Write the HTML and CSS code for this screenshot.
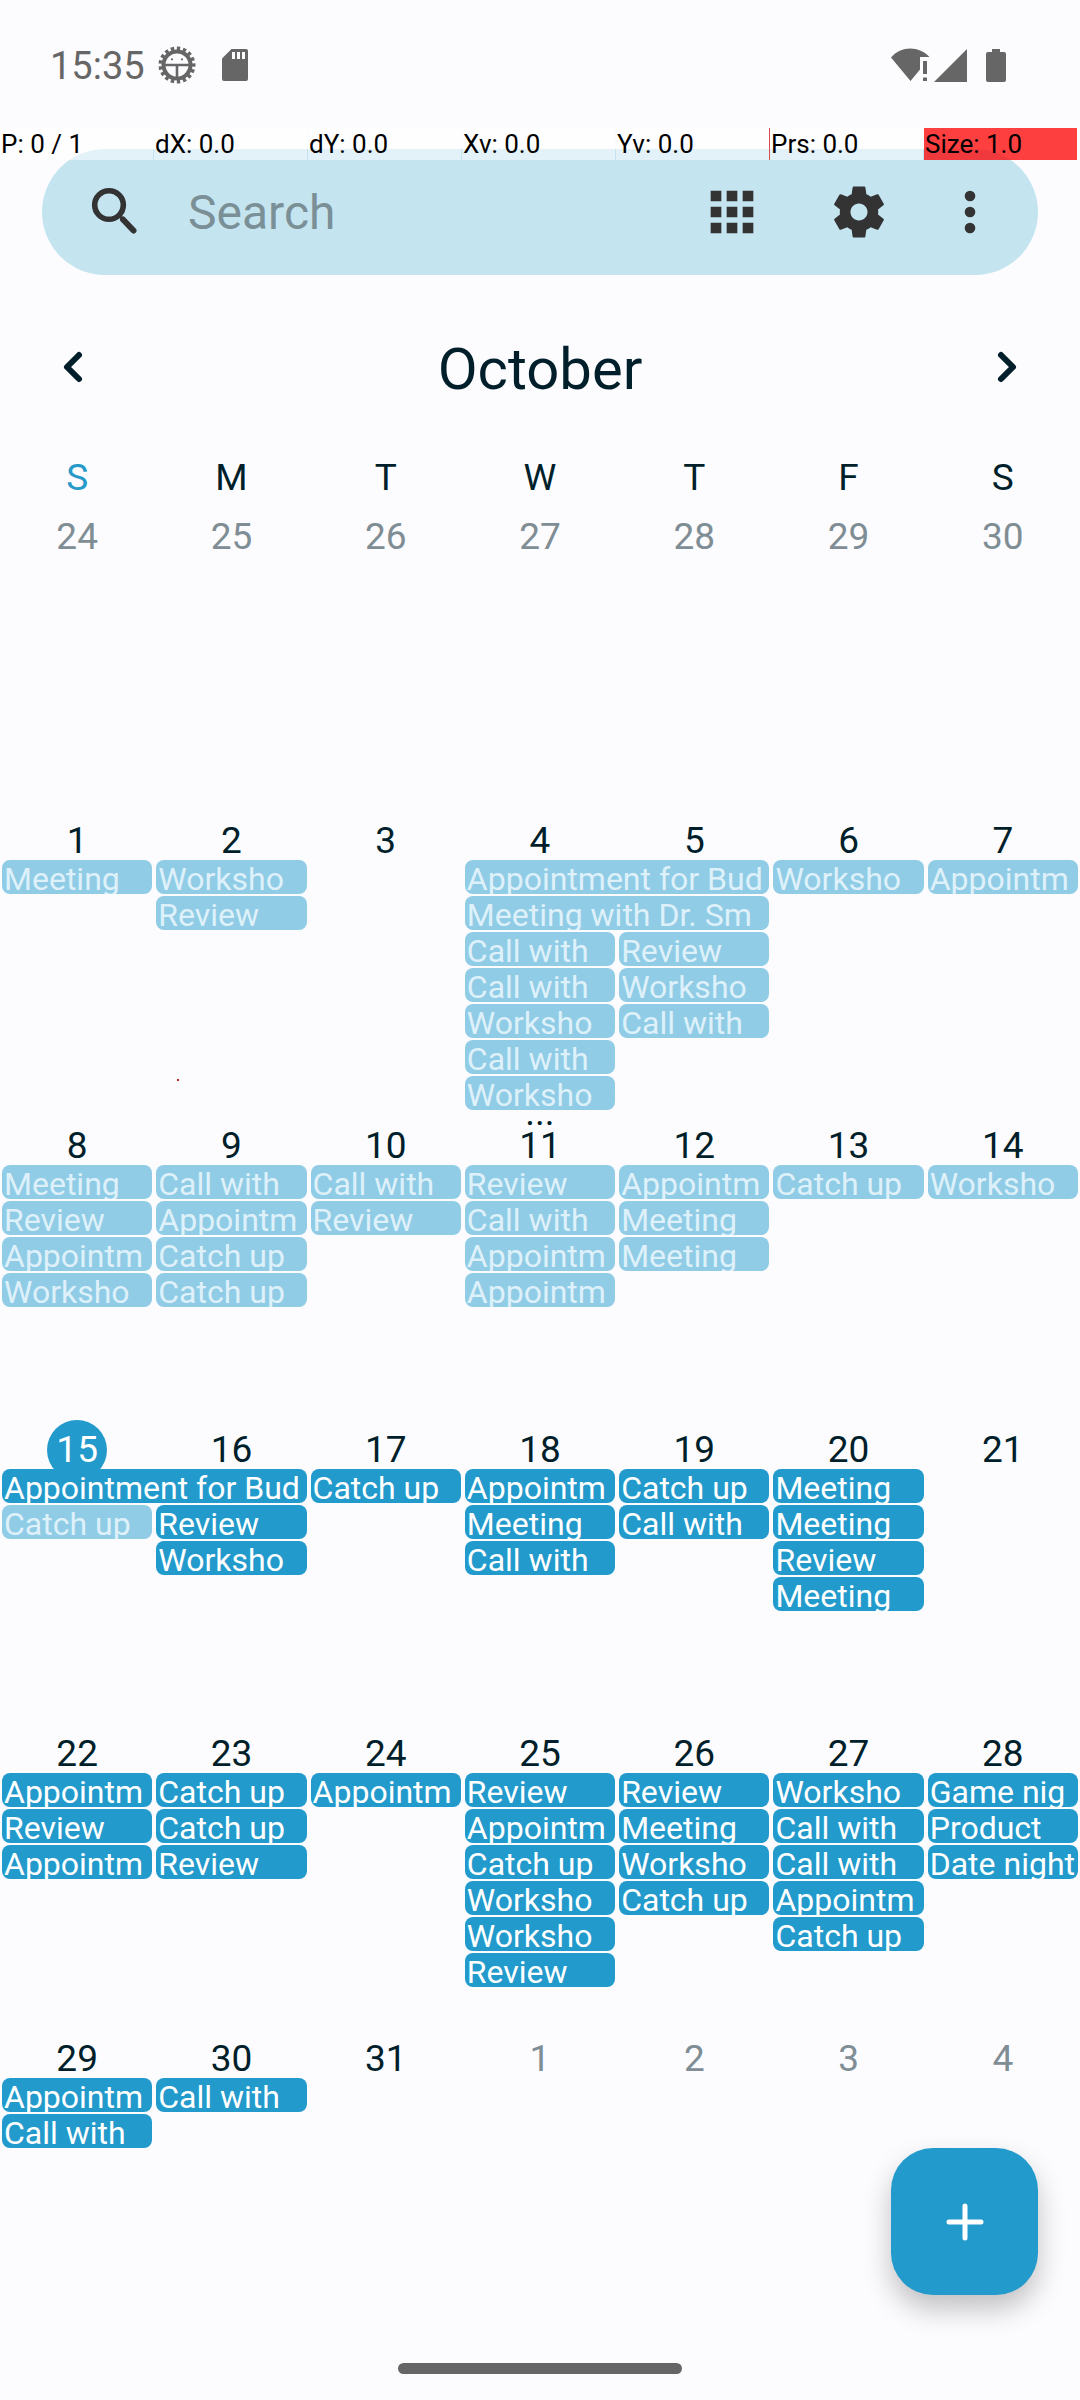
FILE: index.html
```html
<!DOCTYPE html>
<html lang="en">
<head>
<meta charset="utf-8">
<meta name="viewport" content="width=device-width, initial-scale=1">
<title>Calendar</title>
<link rel="stylesheet" href="styles.css">
</head>
<body>
<header class="status">
  <span class="clock">15:35</span>
  <svg class="icon-debug" width="38" height="38" viewBox="0 0 38 38" aria-hidden="true">
    <circle cx="19" cy="19" r="13.5" fill="none" stroke="#666" stroke-width="4"/>
    <circle cx="19" cy="19" r="16.6" fill="none" stroke="#666" stroke-width="3.8" pathLength="68" stroke-dasharray="2.2 1.8" stroke-dashoffset="1.1"/>
    <path d="M5 19h28M19 19v14" stroke="#666" stroke-width="2.6"/>
    <circle cx="14" cy="13.3" r="1.1" fill="#666"/><circle cx="24" cy="13.3" r="1.1" fill="#666"/>
  </svg>
  <svg class="icon-sd" width="26" height="32" viewBox="0 0 26 32" aria-hidden="true">
    <path d="M9.500 0H24a2 2 0 0 1 2 2v28a2 2 0 0 1-2 2H2a2 2 0 0 1-2-2V9.500z" fill="#666"/>
    <path d="M10 3h3v7h-3zM15 3h3v7h-3zM20 3h3v7h-3z" fill="#fcfcff"/>
  </svg>
  <svg class="icon-wifi" width="40" height="34" viewBox="0 0 40 34" aria-hidden="true">
    <path d="M0 9.500C10-2.500 28-2.500 38.500 9H29v12.500L19.500 33z" fill="#666"/>
    <path d="M32 13h4v13h-4zM32 29.500h4V33h-4z" fill="#666"/>
  </svg>
  <svg class="icon-signal" width="33" height="33" viewBox="0 0 33 33" aria-hidden="true"><path d="M33 0v33H0z" fill="#666"/></svg>
  <svg class="icon-battery" width="20" height="33" viewBox="0 0 20 33" aria-hidden="true"><path d="M6 0h8v3h4a2 2 0 0 1 2 2v26a2 2 0 0 1-2 2H2a2 2 0 0 1-2-2V5a2 2 0 0 1 2-2h4z" fill="#666"/></svg>
</header>

<div class="pointer-info">
  <span>P: 0 / 1</span><span>dX: 0.0</span><span>dY: 0.0</span><span>Xv: 0.0</span><span>Yv: 0.0</span><span class="pressure">Prs: 0.0</span><span class="size">Size: 1.0</span>
</div>
<div class="pointer-trace"></div>

<form class="search" role="search">
  <svg width="64" height="64" viewBox="0 0 64 64" fill="none" stroke="#333" aria-hidden="true">
    <circle cx="27" cy="25" r="14.300" stroke-width="5.600"/>
    <path d="M37 35l3 1" stroke-width="5"/>
    <path d="M41 39.500L51.500 50.500" stroke-width="6" stroke-linecap="round"/>
  </svg>
  <input type="text" placeholder="Search" aria-label="Search">
  <button type="button" class="action" aria-label="Change view">
    <svg width="64" height="64" viewBox="0 0 24 24"><path fill="#333" d="M4 8h4V4H4zm6 12h4v-4h-4zm-6 0h4v-4H4zm0-6h4v-4H4zm6 0h4v-4h-4zm6-10v4h4V4zm-6 4h4V4h-4zm6 6h4v-4h-4zm0 6h4v-4h-4z"/></svg>
  </button>
  <button type="button" class="action" aria-label="Settings">
    <svg width="64" height="64" viewBox="0 0 24 24"><path fill="#333" d="M19.140 12.940c.04-.3.060-.61.060-.94 0-.32-.02-.64-.07-.94l2.030-1.580c.18-.14.230-.41.120-.61l-1.920-3.320c-.12-.22-.37-.29-.59-.22l-2.390.96c-.5-.38-1.030-.7-1.620-.94l-.36-2.540c-.04-.24-.24-.41-.48-.41h-3.840c-.24 0-.43.170-.47.410l-.36 2.540c-.59.240-1.130.570-1.620.94l-2.390-.96c-.22-.08-.47 0-.59.220L2.740 8.870c-.12.210-.08.470.12.610l2.030 1.580c-.05.3-.09.630-.09.94s.02.640.07.94l-2.030 1.580c-.18.140-.23.410-.12.610l1.920 3.320c.12.220.37.290.59.220l2.390-.96c.5.380 1.030.7 1.620.94l.36 2.540c.05.240.24.410.48.410h3.840c.24 0 .44-.17.470-.41l.36-2.540c.59-.24 1.130-.56 1.620-.94l2.390.96c.22.080.47 0 .59-.22l1.920-3.320c.12-.22.070-.47-.12-.61l-2.010-1.580zM12 15.200c-1.770 0-3.200-1.430-3.200-3.200s1.430-3.200 3.200-3.200 3.200 1.430 3.200 3.200-1.430 3.200-3.200 3.200z"/></svg>
  </button>
  <button type="button" class="action more" aria-label="More options">
    <svg width="64" height="64" viewBox="0 0 24 24" fill="#333"><circle cx="12" cy="6" r="2"/><circle cx="12" cy="12" r="2"/><circle cx="12" cy="18" r="2"/></svg>
  </button>
</form>

<main class="calendar">
  <div class="month">
    <button type="button" aria-label="Previous month"><svg width="66" height="66" viewBox="0 0 66 66"><path d="M39 21L27 33l12 12"/></svg></button>
    <h1>October</h1>
    <button type="button" aria-label="Next month"><svg width="66" height="66" viewBox="0 0 66 66"><path d="M27 21l12 12-12 12"/></svg></button>
  </div>
  <div class="weekdays">
    <span class="sunday">S</span><span>M</span><span>T</span><span>W</span><span>T</span><span>F</span><span>S</span>
  </div>
  <div class="weeks">
    <section class="week">
      <span class="day other">24</span><span class="day other">25</span><span class="day other">26</span><span class="day other">27</span><span class="day other">28</span><span class="day other">29</span><span class="day other">30</span>
    </section>
    <section class="week">
      <span class="day">1</span><span class="day">2</span><span class="day">3</span><span class="day">4</span><span class="day">5</span><span class="day">6</span><span class="day">7</span>
      <button class="event past sun">Meeting</button>
      <button class="event past mon">Worksho</button>
      <button class="event past mon">Review</button>
      <button class="event past wed two-days">Appointment for Bud</button>
      <button class="event past wed two-days">Meeting with Dr. Sm</button>
      <button class="event past wed">Call with</button>
      <button class="event past wed">Call with</button>
      <button class="event past wed">Worksho</button>
      <button class="event past wed">Call with</button>
      <button class="event past wed">Worksho</button>
      <span class="overflow wed">...</span>
      <button class="event past thu">Review</button>
      <button class="event past thu">Worksho</button>
      <button class="event past thu">Call with</button>
      <button class="event past fri">Worksho</button>
      <button class="event past sat">Appointm</button>
    </section>
    <section class="week">
      <span class="day">8</span><span class="day">9</span><span class="day">10</span><span class="day">11</span><span class="day">12</span><span class="day">13</span><span class="day">14</span>
      <button class="event past sun">Meeting</button>
      <button class="event past sun">Review</button>
      <button class="event past sun">Appointm</button>
      <button class="event past sun">Worksho</button>
      <button class="event past mon">Call with</button>
      <button class="event past mon">Appointm</button>
      <button class="event past mon">Catch up</button>
      <button class="event past mon">Catch up</button>
      <button class="event past tue">Call with</button>
      <button class="event past tue">Review</button>
      <button class="event past wed">Review</button>
      <button class="event past wed">Call with</button>
      <button class="event past wed">Appointm</button>
      <button class="event past wed">Appointm</button>
      <button class="event past thu">Appointm</button>
      <button class="event past thu">Meeting</button>
      <button class="event past thu">Meeting</button>
      <button class="event past fri">Catch up</button>
      <button class="event past sat">Worksho</button>
    </section>
    <section class="week">
      <span class="day today">15</span><span class="day">16</span><span class="day">17</span><span class="day">18</span><span class="day">19</span><span class="day">20</span><span class="day">21</span>
      <button class="event sun two-days">Appointment for Bud</button>
      <button class="event past sun">Catch up</button>
      <button class="event mon">Review</button>
      <button class="event mon">Worksho</button>
      <button class="event tue">Catch up</button>
      <button class="event wed">Appointm</button>
      <button class="event wed">Meeting</button>
      <button class="event wed">Call with</button>
      <button class="event thu">Catch up</button>
      <button class="event thu">Call with</button>
      <button class="event fri">Meeting</button>
      <button class="event fri">Meeting</button>
      <button class="event fri">Review</button>
      <button class="event fri">Meeting</button>
    </section>
    <section class="week">
      <span class="day">22</span><span class="day">23</span><span class="day">24</span><span class="day">25</span><span class="day">26</span><span class="day">27</span><span class="day">28</span>
      <button class="event sun">Appointm</button>
      <button class="event sun">Review</button>
      <button class="event sun">Appointm</button>
      <button class="event mon">Catch up</button>
      <button class="event mon">Catch up</button>
      <button class="event mon">Review</button>
      <button class="event tue">Appointm</button>
      <button class="event wed">Review</button>
      <button class="event wed">Appointm</button>
      <button class="event wed">Catch up</button>
      <button class="event wed">Worksho</button>
      <button class="event wed">Worksho</button>
      <button class="event wed">Review</button>
      <button class="event thu">Review</button>
      <button class="event thu">Meeting</button>
      <button class="event thu">Worksho</button>
      <button class="event thu">Catch up</button>
      <button class="event fri">Worksho</button>
      <button class="event fri">Call with</button>
      <button class="event fri">Call with</button>
      <button class="event fri">Appointm</button>
      <button class="event fri">Catch up</button>
      <button class="event sat">Game nig</button>
      <button class="event sat">Product</button>
      <button class="event sat">Date night</button>
    </section>
    <section class="week">
      <span class="day">29</span><span class="day">30</span><span class="day">31</span><span class="day other">1</span><span class="day other">2</span><span class="day other">3</span><span class="day other">4</span>
      <button class="event sun">Appointm</button>
      <button class="event sun">Call with</button>
      <button class="event mon">Call with</button>
    </section>
  </div>
  <button type="button" class="fab" aria-label="New event">
    <svg width="38" height="38" viewBox="0 0 38 38"><path d="M19 3v32M3 19h32" stroke="#fff" stroke-width="5" stroke-linecap="round"/></svg>
  </button>
</main>
<footer class="gesture"><span></span></footer>
</body>
</html>
```
FILE: styles.css
```css
* {
  box-sizing: border-box;
}

body {
  position: relative;
  display: flex;
  flex-direction: column;
  min-height: 100vh;
  margin: 0;
  background: #fcfcff;
  color: #001f2a;
  font-family: Roboto, sans-serif;
}

button {
  margin: 0;
  padding: 0;
  border: 0;
  background: none;
  color: inherit;
  font: inherit;
}

svg {
  display: block;
}

/* Status bar */
.status {
  display: flex;
  align-items: center;
  height: 128px;
  padding: 2px 74px 0 50px;
  color: #666;
}

.clock {
  padding-top: 2px;
  font-size: 38px;
  line-height: 44px;
}

.icon-debug {
  margin-left: 13px;
}

.icon-sd {
  margin-left: 26px;
}

.icon-wifi {
  margin-left: auto;
}

.icon-signal {
  margin-left: 3px;
}

.icon-battery {
  margin-left: 19px;
}

/* Touch pointer read-out drawn over the app */
.pointer-info {
  position: absolute;
  z-index: 2;
  top: 128px;
  left: 0;
  right: 3px;
  display: grid;
  grid-template-columns: repeat(7, 1fr);
  gap: 1px;
  color: #000;
  font-size: 26px;
  line-height: 32px;
}

.pointer-info span {
  padding-left: 1px;
  background: rgba(255, 255, 255, 0.5);
}

.pointer-info .pressure {
  box-shadow: -1px 0 #d94a52;
}

.pointer-info .size {
  background: rgba(255, 0, 0, 0.75);
}

.pointer-trace {
  position: absolute;
  z-index: 2;
  top: 1079px;
  left: 177px;
  width: 2px;
  height: 2px;
  background: #b3262e;
}

/* Search bar */
.search {
  display: flex;
  align-items: center;
  height: 126px;
  margin: 21px 42px 0;
  padding: 0 21px 0 40px;
  border-radius: 63px;
  background: #c4e4f0;
}

.search input {
  flex: 1;
  min-width: 0;
  margin-left: 42px;
  padding: 2px 0 0;
  border: 0;
  outline: 0;
  background: none;
  color: #001f2a;
  font: 48px/64px Roboto, sans-serif;
}

.search input::placeholder {
  color: #7b8f96;
  opacity: 1;
}

.action {
  display: flex;
  justify-content: center;
  width: 127px;
}

.more {
  width: 95px;
}

/* Calendar */
.calendar {
  position: relative;
  display: flex;
  flex: 1;
  flex-direction: column;
  overflow: hidden;
}

.month {
  display: flex;
  align-items: center;
  justify-content: space-between;
  height: 154px;
  margin-top: 15px;
  padding: 0 40px;
}

.month h1 {
  margin: 0;
  padding-top: 4px;
  font-size: 58px;
  font-weight: 400;
  line-height: 68px;
}

.month path {
  fill: none;
  stroke: #001f2a;
  stroke-width: 6;
  stroke-linecap: round;
  stroke-linejoin: round;
}

.weekdays {
  display: grid;
  grid-template-columns: repeat(7, 1fr);
  font-size: 37px;
  line-height: 67px;
  text-align: center;
}

.sunday {
  color: #2699c8;
}

/* Six weeks share the height that is left; busy days do not stretch a week */
.weeks {
  display: grid;
  flex: 1;
  grid-template-rows: repeat(6, minmax(300px, 1fr));
}

.week {
  contain: size;
  display: grid;
  grid-template-columns: repeat(7, minmax(0, 1fr));
  grid-template-rows: 43px;
  grid-auto-rows: 34px;
  grid-auto-flow: row dense;
  row-gap: 2px;
  min-height: 0;
}

.day {
  position: relative;
  z-index: 0;
  padding-top: 8px;
  font-size: 37px;
  line-height: 36px;
  text-align: center;
}

.other {
  color: #7f8d94;
}

.today {
  color: #fff;
}

.today::before {
  content: "";
  position: absolute;
  z-index: -1;
  top: -4px;
  left: calc(50% - 30px);
  width: 60px;
  height: 60px;
  border-radius: 50%;
  background: #229acc;
}

.event {
  z-index: 1;
  justify-self: stretch;
  margin: 0 2px;
  padding-left: 2px;
  overflow: hidden;
  border-radius: 8px;
  background: #229acc;
  color: #fff;
  font-size: 32px;
  line-height: 38px;
  text-align: left;
  white-space: nowrap;
}

.past {
  background: #90cce5;
  color: #def1fa;
}

.overflow {
  font-size: 37px;
  line-height: 2px;
  text-align: center;
}

.sun { grid-column-start: 1; }
.mon { grid-column-start: 2; }
.tue { grid-column-start: 3; }
.wed { grid-column-start: 4; }
.thu { grid-column-start: 5; }
.fri { grid-column-start: 6; }
.sat { grid-column-start: 7; }
.two-days { grid-column-end: span 2; }

.fab {
  position: absolute;
  z-index: 2;
  right: 42px;
  bottom: 42px;
  display: flex;
  align-items: center;
  justify-content: center;
  width: 147px;
  height: 147px;
  border-radius: 42px;
  background: #229acc;
  box-shadow: 0 14px 28px rgba(0, 0, 0, 0.24);
}

/* Gesture navigation handle */
.gesture {
  display: flex;
  align-items: center;
  justify-content: center;
  height: 63px;
}

.gesture span {
  width: 284px;
  height: 11px;
  border-radius: 6px;
  background: #666;
}
```
